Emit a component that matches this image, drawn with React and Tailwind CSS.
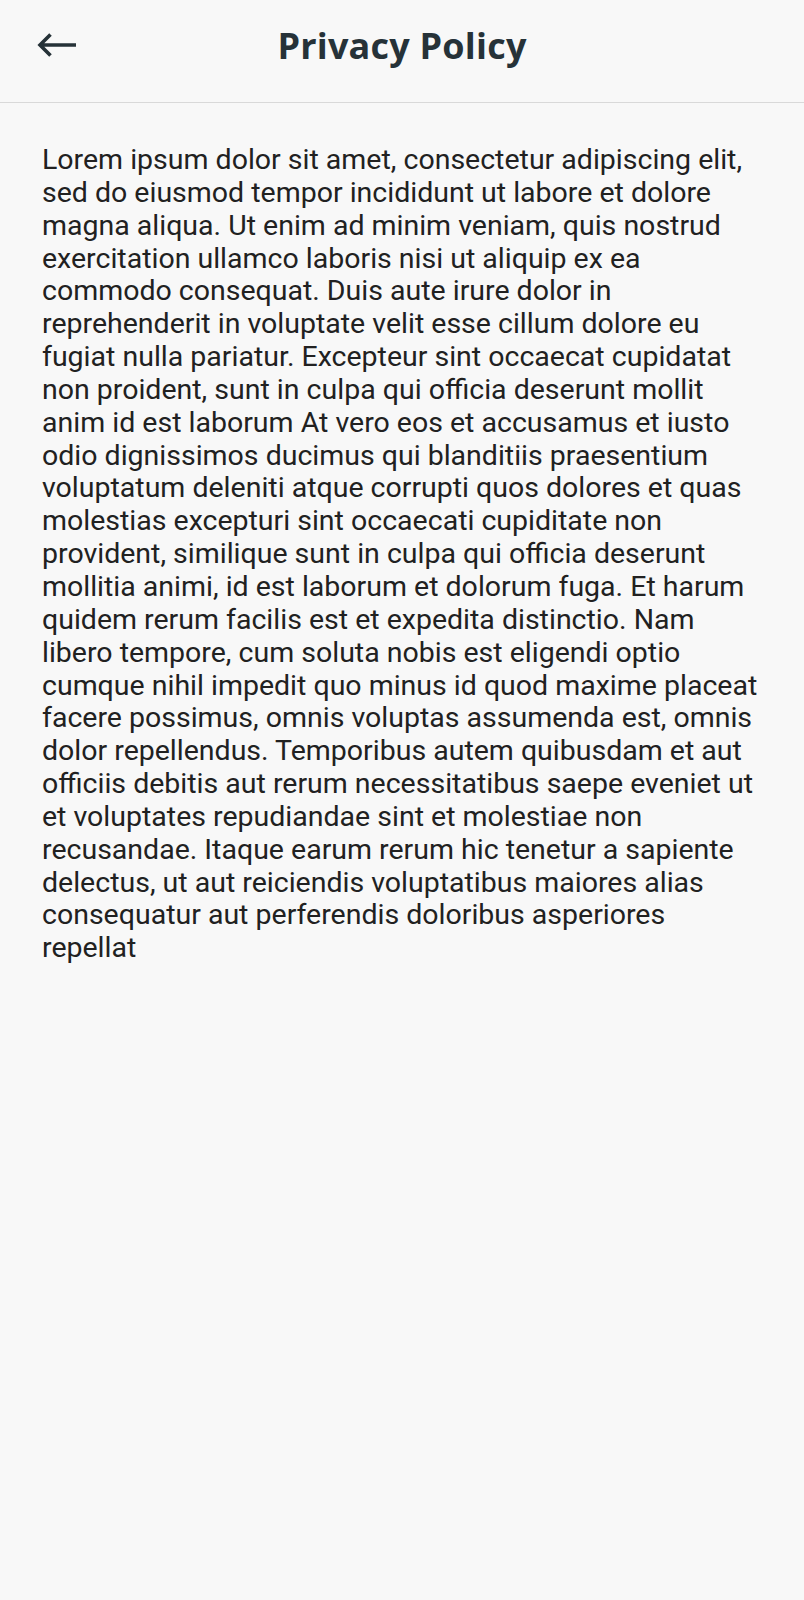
const lines = [
  "Lorem ipsum dolor sit amet, consectetur adipiscing elit,",
  "sed do eiusmod tempor incididunt ut labore et dolore",
  "magna aliqua. Ut enim ad minim veniam, quis nostrud",
  "exercitation ullamco laboris nisi ut aliquip ex ea",
  "commodo consequat. Duis aute irure dolor in",
  "reprehenderit in voluptate velit esse cillum dolore eu",
  "fugiat nulla pariatur. Excepteur sint occaecat cupidatat",
  "non proident, sunt in culpa qui officia deserunt mollit",
  "anim id est laborum At vero eos et accusamus et iusto",
  "odio dignissimos ducimus qui blanditiis praesentium",
  "voluptatum deleniti atque corrupti quos dolores et quas",
  "molestias excepturi sint occaecati cupiditate non",
  "provident, similique sunt in culpa qui officia deserunt",
  "mollitia animi, id est laborum et dolorum fuga. Et harum",
  "quidem rerum facilis est et expedita distinctio. Nam",
  "libero tempore, cum soluta nobis est eligendi optio",
  "cumque nihil impedit quo minus id quod maxime placeat",
  "facere possimus, omnis voluptas assumenda est, omnis",
  "dolor repellendus. Temporibus autem quibusdam et aut",
  "officiis debitis aut rerum necessitatibus saepe eveniet ut",
  "et voluptates repudiandae sint et molestiae non",
  "recusandae. Itaque earum rerum hic tenetur a sapiente",
  "delectus, ut aut reiciendis voluptatibus maiores alias",
  "consequatur aut perferendis doloribus asperiores",
  "repellat",
];

export default function App() {
  return (
    <div className="min-h-[1600px] w-full bg-[#f8f8f8]">
      <header className="relative flex h-[103px] items-center justify-center border-b border-[#d9d9d9]">
        <button className="absolute left-[37px] top-[33px] flex h-[24px] w-[39px] items-center justify-center text-[#263238]">
          <svg width="39" height="24" viewBox="0 0 39 24" fill="none">
            <path d="M39 12H3.5M13.5 1.5L3 12L13.5 22.5" stroke="currentColor" strokeWidth="3.6" strokeLinecap="butt" strokeLinejoin="miter" />
          </svg>
        </button>
        <h1
          className="mb-[10px] text-[36px] font-bold leading-none tracking-[0.2px] text-[#263238]"
          style={{ fontFamily: '"Open Sans", "Lato", sans-serif' }}
        >
          Privacy Policy
        </h1>
      </header>
      <main className="px-[42px] pt-[41px]">
        <p
          className="text-[28.5px] leading-[32.85px] text-[#212121]"
          style={{ fontFamily: 'Roboto, "Noto Sans", sans-serif' }}
        >
          {lines.map((l, i) => (
            <span key={i} className="block whitespace-nowrap">
              {l}
            </span>
          ))}
        </p>
      </main>
    </div>
  );
}
